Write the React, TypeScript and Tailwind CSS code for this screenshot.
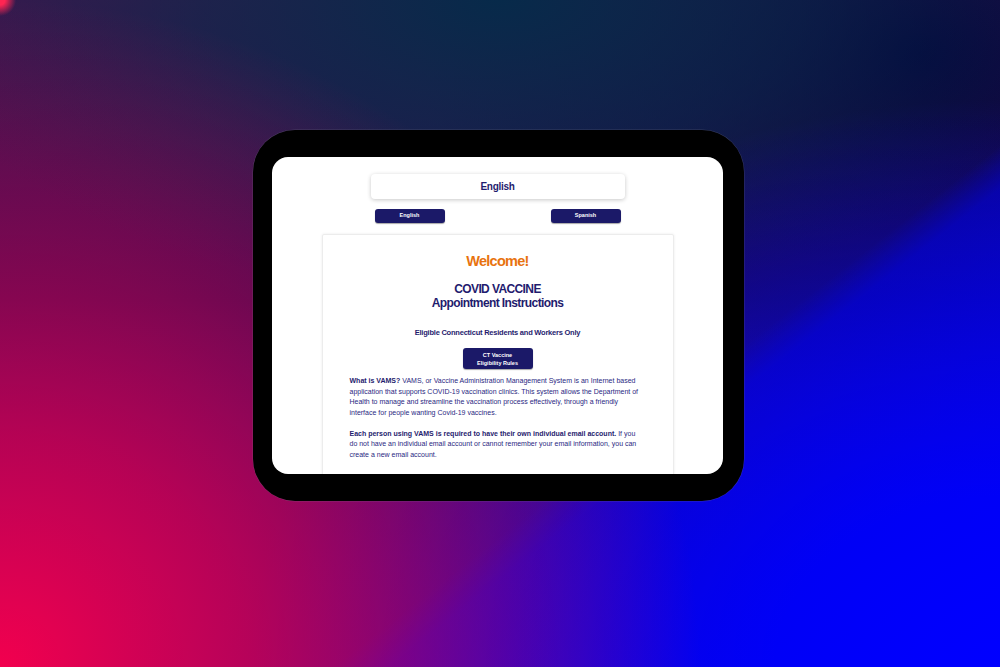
import React from "react";

const navy = "text-[#1f1c6e]";

function NavyButton({ children, className = "" }: { children: React.ReactNode; className?: string }) {
  return (
    <button
      className={`bg-[#1b1968] text-white font-bold rounded-[3px] shadow-[0_1px_1px_rgba(0,0,0,0.35)] ${className}`}
    >
      {children}
    </button>
  );
}

export default function App() {
  return (
    <div
      className="w-full h-screen overflow-hidden flex items-center justify-center pb-[36px] pr-[3px] font-['Liberation_Sans',Arial,sans-serif] bg-[radial-gradient(circle_at_0%_0%,#ff2552_0px,#ff2552_5px,rgba(255,37,82,0)_16px),radial-gradient(ellipse_70%_100%_at_0%_100%,#f2004e_0%,rgba(215,0,80,0.8)_35%,rgba(200,0,80,0)_100%),linear-gradient(142deg,rgba(0,0,230,0)_0%,rgba(0,0,230,0)_64%,rgba(0,0,235,0.5)_67%,rgba(0,0,255,0.8)_100%),radial-gradient(ellipse_75%_85%_at_100%_100%,#0000ff_0%,#0000f2_30%,rgba(0,0,230,0)_100%),radial-gradient(ellipse_60%_45%_at_50%_0%,#072a4a_0%,rgba(7,42,74,0.6)_50%,rgba(7,42,74,0)_100%),radial-gradient(ellipse_50%_55%_at_92%_8%,#04043c_0%,rgba(4,4,60,0)_100%),linear-gradient(180deg,#40164e_0%,#230d52_45%,#3a0a82_100%)]"
    >
      {/* device frame */}
      <div className="w-[491px] h-[371px] bg-black rounded-[42px] pt-[27px] pb-[27px] pl-[19px] pr-[21px] shadow-[0_0_0_0.5px_rgba(120,120,140,0.35)]">
        <div className="w-full h-full bg-white rounded-[16px] overflow-hidden flex flex-col items-center pt-[17px]">
          {/* language header */}
          <div className="w-[254px]">
            <div className="h-[25px] rounded-[4px] bg-white shadow-[0_1px_4px_rgba(0,0,0,0.22)] flex items-center justify-center">
              <span className={`text-[10px] tracking-[-0.03em] font-bold ${navy}`}>English</span>
            </div>
            <div className="flex justify-between px-[4px] mt-[10px]">
              <NavyButton className="w-[70px] h-[14px] text-[5.5px] leading-none">English</NavyButton>
              <NavyButton className="w-[70px] h-[14px] text-[5.5px] leading-none">Spanish</NavyButton>
            </div>
          </div>

          {/* instructions card */}
          <div className="w-[352px] mt-[11px] shrink-0 bg-white border border-[#ececec] shadow-[0_0_3px_rgba(0,0,0,0.08)] rounded-[2px] pt-[16px] pb-[20px] pl-[27px] pr-[31px]">
            <h1 className="text-center text-[14.5px] tracking-[-0.05em] leading-[20px] font-bold text-[#e8730f] pl-[4px]">
              Welcome!
            </h1>
            <h2 className={`text-center text-[12px] tracking-[-0.05em] leading-[14px] font-bold ${navy} mt-[11px] pl-[4px]`}>
              COVID VACCINE
              <br />
              Appointment Instructions
            </h2>
            <p className={`text-center text-[7.5px] tracking-[-0.03em] leading-[10px] font-bold ${navy} mt-[18px] pl-[4px]`}>
              Eligible Connecticut Residents and Workers Only
            </p>
            <div className="flex justify-center mt-[10px] pl-[4px]">
              <NavyButton className="w-[70px] h-[21px] text-[5.5px] leading-[8px] rounded-[3px]">
                CT Vaccine
                <br />
                Eligibility Rules
              </NavyButton>
            </div>
            <div className="mt-[7px] text-[7px] leading-[10.5px] text-[#2a2882]">
              <p>
                <b className="text-[#1f1c6e]">What is VAMS?</b> VAMS, or Vaccine Administration Management System is an
                Internet based application that supports COVID-19 vaccination clinics. This system allows the
                Department of Health to manage and streamline the vaccination process effectively, through a
                friendly interface for people wanting Covid-19 vaccines.
              </p>
              <p className="mt-[10.5px]">
                <b className="text-[#1f1c6e]">Each person using VAMS is required to have their own individual email account.</b>{" "}
                If you do not have an individual email account or cannot remember your email information, you can
                create a new email account.
              </p>
            </div>
          </div>
        </div>
      </div>
    </div>
  );
}
